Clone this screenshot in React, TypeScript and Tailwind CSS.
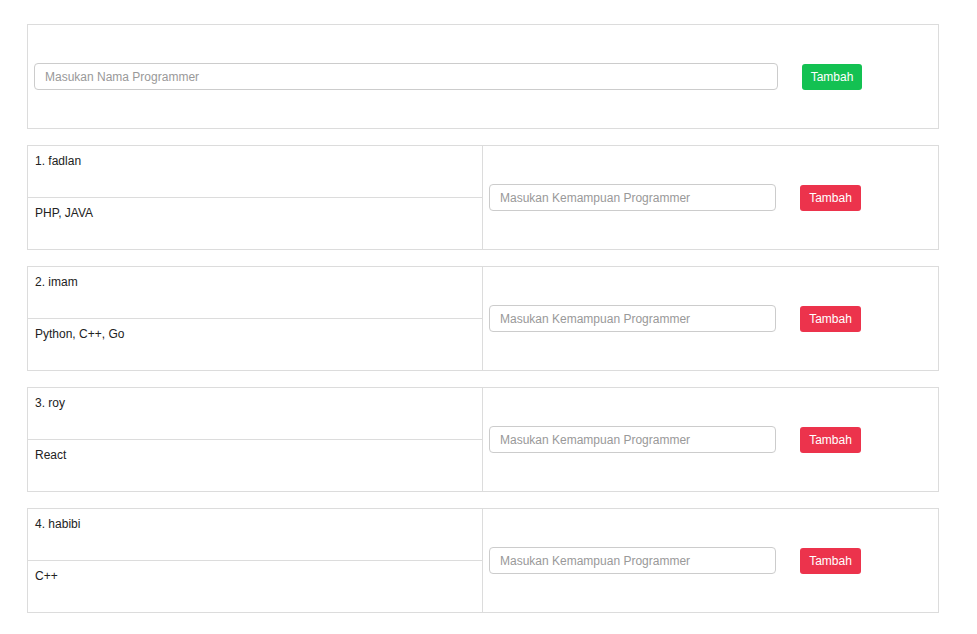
import { useState } from "react"

type Programmer = { name: string; skills: string[] }

const initial: Programmer[] = [
  { name: "fadlan", skills: ["PHP", "JAVA"] },
  { name: "imam", skills: ["Python", "C++", "Go"] },
  { name: "roy", skills: ["React"] },
  { name: "habibi", skills: ["C++"] },
]

function Row({ index, data }: { index: number; data: Programmer }) {
  return (
    <div className="flex h-[105px] border border-[#dcdcdc]">
      <div className="flex w-[455px] flex-col border-r border-[#dcdcdc]">
        <div className="h-[52px] border-b border-[#dcdcdc] px-[7px] pt-[6px]">
          {index}. {data.name}
        </div>
        <div className="flex-1 px-[7px] pt-[6px]">{data.skills.join(", ")}</div>
      </div>
      <div className="flex flex-1 items-center pl-[6px]">
        <input
          className="h-[27px] w-[287px] rounded-[4px] border border-[#cccccc] px-[10px] text-[12px] outline-none placeholder:text-[#999999]"
          placeholder="Masukan Kemampuan Programmer"
        />
        <button className="ml-[24px] h-[26px] w-[61px] rounded-[3px] bg-[#ec334c] text-[12px] text-white">
          Tambah
        </button>
      </div>
    </div>
  )
}

export default function App() {
  const [list] = useState(initial)

  return (
    <div className="min-h-screen bg-white px-[27px] pt-[24px] text-[12px] text-[#222] [font-family:'Liberation_Sans',Arial,sans-serif]">
      <div className="flex w-[912px] flex-col gap-[16px]">
        {/* form tambah programmer */}
        <div className="flex h-[105px] items-center border border-[#dcdcdc] pl-[6px]">
          <input
            className="h-[27px] w-[744px] rounded-[4px] border border-[#cccccc] px-[10px] text-[12px] outline-none placeholder:text-[#999999]"
            placeholder="Masukan Nama Programmer"
          />
          <button className="ml-[24px] h-[26px] w-[60px] rounded-[3px] bg-[#13c152] text-[12px] text-white">
            Tambah
          </button>
        </div>

        {list.map((p, i) => (
          <Row key={p.name} index={i + 1} data={p} />
        ))}
      </div>
    </div>
  )
}
